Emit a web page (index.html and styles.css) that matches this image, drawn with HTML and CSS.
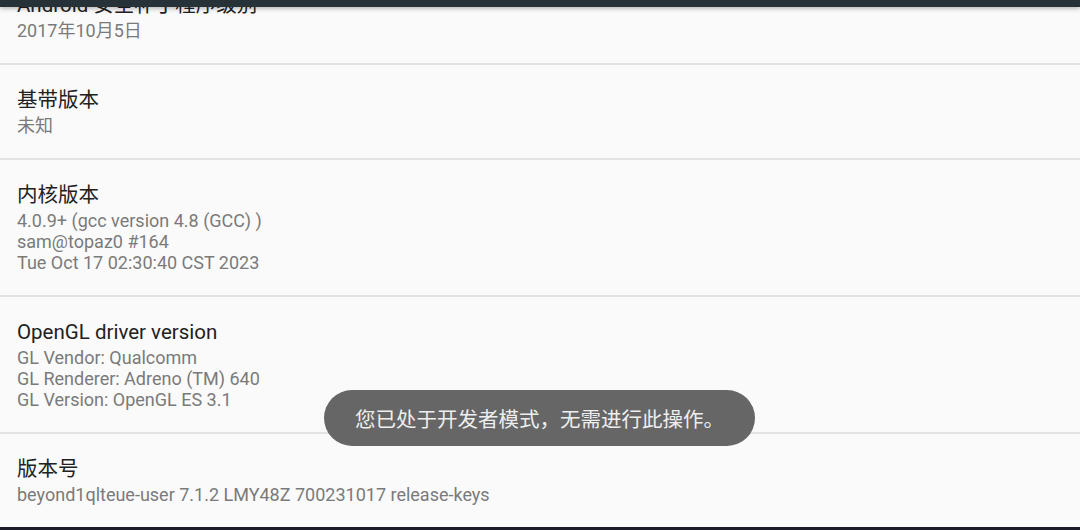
FILE: index.html
```html
<!DOCTYPE html>
<html lang="zh-CN">
<head>
    <meta charset="UTF-8">
    <meta name="viewport" content="width=device-width, initial-scale=1.0">
    <title>关于手机</title>
    <link rel="stylesheet" href="styles.css">
</head>
<body>
    <div class="app-bar"></div>
    <div class="list">
        <div class="row first">
            <div class="title">Android 安全补丁程序级别</div>
            <div class="summary">2017年10月5日</div>
        </div>
        <div class="row">
            <div class="title">基带版本</div>
            <div class="summary">未知</div>
        </div>
        <div class="row">
            <div class="title">内核版本</div>
            <div class="summary">4.0.9+ (gcc version 4.8 (GCC) )<br>sam@topaz0 #164<br>Tue Oct 17 02:30:40 CST 2023</div>
        </div>
        <div class="row">
            <div class="title">OpenGL driver version</div>
            <div class="summary">GL Vendor: Qualcomm<br>GL Renderer: Adreno (TM) 640<br>GL Version: OpenGL ES 3.1</div>
        </div>
        <div class="row">
            <div class="title">版本号</div>
            <div class="summary">beyond1qlteue-user 7.1.2 LMY48Z 700231017 release-keys</div>
        </div>
    </div>
    <div class="nav-bar"></div>
    <div class="toast">您已处于开发者模式，无需进行此操作。</div>
</body>
</html>
```

FILE: styles.css
```css
html, body {
    margin: 0;
    height: 530px;
    overflow: hidden;
}
body {
    background-color: #fafafa;
    font-family: Roboto, "Noto Sans CJK SC", sans-serif;
    display: flex;
    flex-direction: column;
}
.app-bar {
    height: 7px;
    flex: none;
    background-color: #263238;
    box-shadow: 0 2px 4px rgba(0, 0, 0, 0.25);
    position: relative;
    z-index: 1;
}
.list {
    flex: 1;
    overflow: hidden;
}
.row {
    padding: 20px 17px 22px;
    border-bottom: 2px solid #e2e2e2;
}
.row.first {
    margin-top: -37px;
}
.title {
    font-size: 20.5px;
    line-height: 30px;
    color: #212121;
}
.summary {
    font-size: 18px;
    line-height: 21px;
    color: #7a7a7a;
}
.nav-bar {
    height: 3px;
    flex: none;
    background-color: #1b1b2b;
}
.toast {
    position: absolute;
    left: 324px;
    top: 390px;
    width: 431px;
    height: 56px;
    box-sizing: border-box;
    border-radius: 28px;
    background-color: #666666;
    color: #eeeeee;
    font-size: 20.5px;
    display: flex;
    align-items: center;
    justify-content: center;
}
```
